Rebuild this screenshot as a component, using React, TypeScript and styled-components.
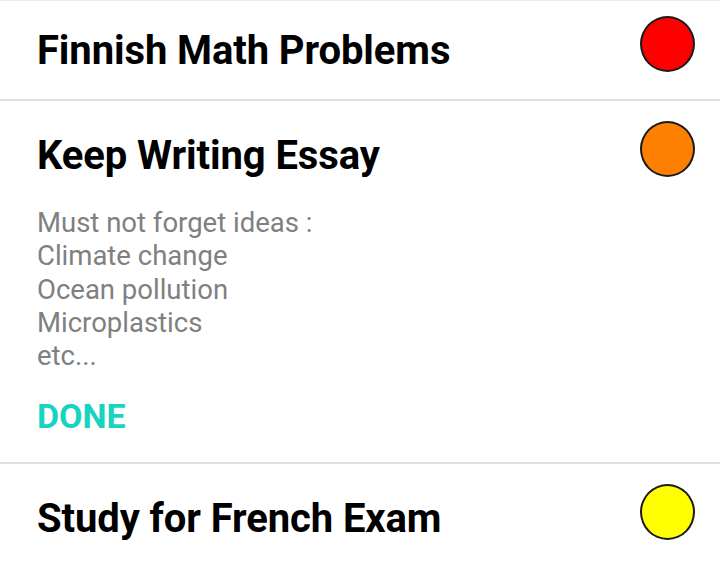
import styled, { createGlobalStyle } from "styled-components";

const GlobalStyle = createGlobalStyle`
  html, body {
    margin: 0;
    padding: 0;
    background: #ffffff;
  }
  body {
    font-family: Roboto, "Noto Sans", "Liberation Sans", sans-serif;
    overflow: hidden;
  }
  #root {
    border-top: 1px solid #ececec;
  }
`;

interface Task {
  title: string;
  color: string;
  notes?: string[];
  expanded?: boolean;
}

const TASKS: Task[] = [
  { title: "Finnish Math Problems", color: "#ff0000" },
  {
    title: "Keep Writing Essay",
    color: "#ff8000",
    expanded: true,
    notes: [
      "Must not forget ideas :",
      "Climate change",
      "Ocean pollution",
      "Microplastics",
      "etc...",
    ],
  },
  { title: "Study for French Exam", color: "#ffff00" },
];

const TaskItem = ({ task }: { task: Task }) => {
  const { title, color, notes, expanded } = task;
  return (
    <StItem>
      <StHeader>
        <StTitle>{title}</StTitle>
        <StDot $color={color} />
      </StHeader>
      {expanded && (
        <StBody>
          <StNotes>
            {notes?.map((line) => (
              <StNoteLine key={line}>{line}</StNoteLine>
            ))}
          </StNotes>
          <StDoneButton type="button">DONE</StDoneButton>
        </StBody>
      )}
    </StItem>
  );
};

const App = () => {
  return (
    <>
      <GlobalStyle />
      <StList>
        {TASKS.map((task) => (
          <TaskItem key={task.title} task={task} />
        ))}
      </StList>
    </>
  );
};

export default App;

const StList = styled.ul`
  margin: -5px 0 0;
  padding: 0;
  list-style: none;
`;
const StItem = styled.li`
  & + & {
    border-top: 2px solid #dedede;
  }
`;
const StHeader = styled.div`
  display: flex;
  justify-content: space-between;
  align-items: flex-start;

  height: 103px;
  padding: 20px 25px 0 37px;
  box-sizing: border-box;
`;
const StTitle = styled.h2`
  margin: 11px 0 0;

  color: #000000;
  font-size: 40px;
  font-weight: 700;
  line-height: 47px;
  letter-spacing: -0.1px;
`;
const StDot = styled.span<{ $color: string }>`
  flex-shrink: 0;
  width: 55px;
  height: 56px;

  box-sizing: border-box;
  border: 2px solid #1a1a1a;
  border-radius: 50%;
  background-color: ${({ $color }) => $color};
`;
const StBody = styled.div`
  display: flex;
  flex-direction: column;
  align-items: flex-start;

  padding: 2px 25px 26px 37px;
`;
const StNotes = styled.div`
  color: #808080;
  font-size: 27.5px;
  line-height: 33.3px;
`;
const StNoteLine = styled.div``;
const StDoneButton = styled.button`
  margin-top: 24px;
  padding: 0;

  border: none;
  background: none;
  color: #17d4c0;
  font-family: inherit;
  font-size: 34px;
  font-weight: 700;
  line-height: 40px;
`;
